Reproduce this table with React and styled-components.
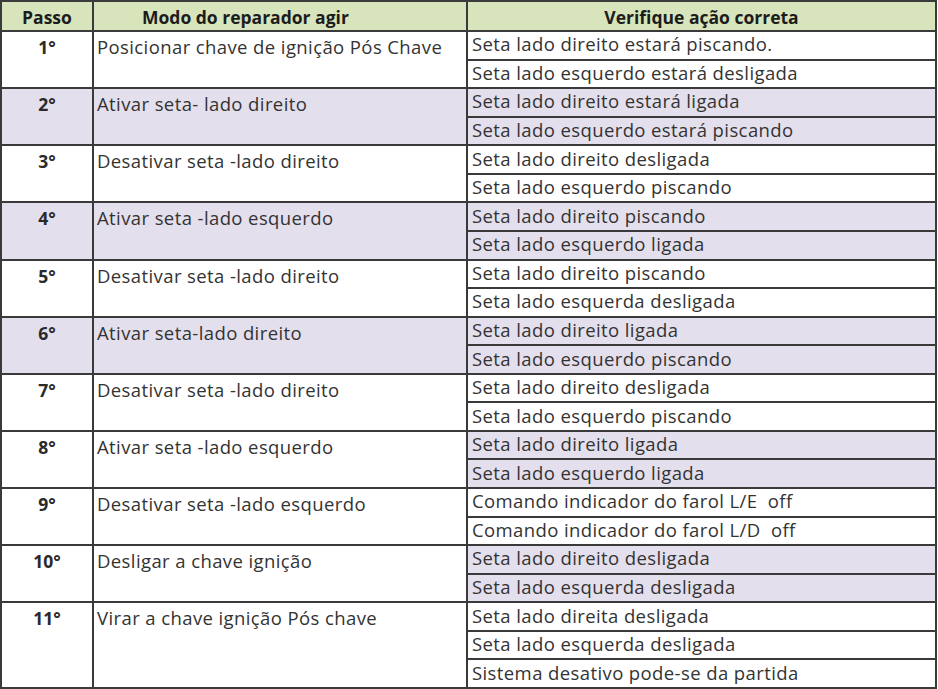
import React from "react";
import styled, { createGlobalStyle } from "styled-components";

const Global = createGlobalStyle`
  html, body { margin: 0; padding: 0; background: #ffffff; }
  body { font-family: "Open Sans", Lato, "Liberation Sans", sans-serif; }
`;

const LINE = "#3a3a3a";
const GREEN = "#d8e4bc";
const LILAC = "#e4dfec";

const steps = [
  { n: "1°", mode: "Posicionar chave de ignição Pós Chave", shade: "none", checks: ["Seta lado direito estará piscando.", "Seta lado esquerdo estará desligada"] },
  { n: "2°", mode: "Ativar seta- lado direito", shade: "all", checks: ["Seta lado direito estará ligada", "Seta lado esquerdo estará piscando"] },
  { n: "3°", mode: "Desativar seta -lado direito", shade: "none", checks: ["Seta lado direito desligada", "Seta lado esquerdo piscando"] },
  { n: "4°", mode: "Ativar seta -lado esquerdo", shade: "all", checks: ["Seta lado direito piscando", "Seta lado esquerdo ligada"] },
  { n: "5°", mode: "Desativar seta -lado direito", shade: "none", checks: ["Seta lado direito piscando", "Seta lado esquerda desligada"] },
  { n: "6°", mode: "Ativar seta-lado direito", shade: "all", checks: ["Seta lado direito ligada", "Seta lado esquerdo piscando"] },
  { n: "7°", mode: "Desativar seta -lado direito", shade: "none", checks: ["Seta lado direito desligada", "Seta lado esquerdo piscando"] },
  { n: "8°", mode: "Ativar seta -lado esquerdo", shade: "checks", checks: ["Seta lado direito ligada", "Seta lado esquerdo ligada"] },
  { n: "9°", mode: "Desativar seta -lado esquerdo", shade: "none", checks: ["Comando indicador do farol L/E  off", "Comando indicador do farol L/D  off"] },
  { n: "10°", mode: "Desligar a chave ignição", shade: "checks", checks: ["Seta lado direito desligada", "Seta lado esquerda desligada"] },
  { n: "11°", mode: "Virar a chave ignição Pós chave", shade: "none", checks: ["Seta lado direita desligada", "Seta lado esquerda desligada", "Sistema desativo pode-se da partida"] },
];

const Table = styled.div`
  display: grid;
  grid-template-columns: 92px 374px 1fr;
  grid-template-rows: 30px repeat(23, 1fr);
  width: 937px;
  height: 689px;
  box-sizing: border-box;
  border-left: 2px solid ${LINE};
  border-top: 2px solid ${LINE};
`;

const Cell = styled.div`
  box-sizing: border-box;
  border-right: 2px solid ${LINE};
  border-bottom: 2px solid ${LINE};
  background: ${(p) => (p.$shade ? LILAC : "#ffffff")};
  display: flex;
  overflow: hidden;
  white-space: pre;
  font-size: 17.5px;
  grid-row: ${(p) => p.$row} / span ${(p) => p.$span || 1};
`;

const HeadCell = styled(Cell)`
  background: ${GREEN};
  align-items: center;
  justify-content: ${(p) => p.$align || "center"};
  padding-left: ${(p) => p.$pad || 0}px;
  padding-top: 1px;
  font-weight: 700;
  color: #1c1c1c;
`;

const StepCell = styled(Cell)`
  justify-content: center;
  align-items: flex-start;
  padding-top: 3px;
  font-weight: 700;
  color: #2a2a2a;
`;

const ModeCell = styled(Cell)`
  align-items: flex-start;
  padding: 2px 0 0 3px;
  font-size: 18.5px;
  letter-spacing: 0.4px;
  color: #333333;
`;

const CheckCell = styled(Cell)`
  align-items: center;
  padding: 0 0 3px 4px;
  font-size: 18.5px;
  letter-spacing: 0.4px;
  color: #333333;
`;

export default function App() {
  let row = 2;
  const cells = [];
  steps.forEach((s) => {
    const span = s.checks.length;
    cells.push(
      <StepCell key={s.n + "n"} $row={row} $span={span} $shade={s.shade === "all"}>
        {s.n}
      </StepCell>
    );
    cells.push(
      <ModeCell key={s.n + "m"} $row={row} $span={span} $shade={s.shade === "all"}>
        {s.mode}
      </ModeCell>
    );
    s.checks.forEach((c, i) => {
      cells.push(
        <CheckCell key={s.n + "c" + i} $row={row + i} $shade={s.shade !== "none"}>
          {c}
        </CheckCell>
      );
    });
    row += span;
  });
  return (
    <>
      <Global />
      <Table>
        <HeadCell $row={1}>Passo</HeadCell>
        <HeadCell $row={1} $align="flex-start" $pad={48}>Modo do reparador agir</HeadCell>
        <HeadCell $row={1}>Verifique ação correta</HeadCell>
        {cells}
      </Table>
    </>
  );
}
